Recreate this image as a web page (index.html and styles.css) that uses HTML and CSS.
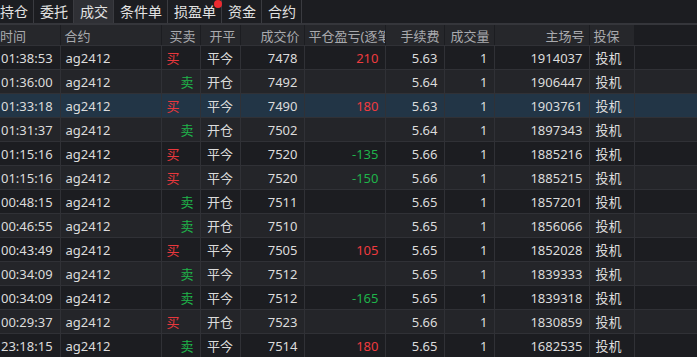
FILE: index.html
```html
<!DOCTYPE html>
<html lang="zh-CN">
  <head>
    <meta charset="UTF-8" />
    <title>成交</title>
    <link rel="stylesheet" href="styles.css">
  </head>
  <body>
    <nav class="tabs">
      <span class="tab">持仓</span>
      <span class="tab">委托</span>
      <span class="tab active">成交</span>
      <span class="tab">条件单</span>
      <span class="tab has-dot">损盈单</span>
      <span class="tab">资金</span>
      <span class="tab">合约</span>
    </nav>
    <table class="trades">
      <colgroup>
        <col class="c-time" /><col class="c-code" /><col class="c-side" /><col class="c-oc" />
        <col class="c-price" /><col class="c-pnl" /><col class="c-fee" /><col class="c-vol" />
        <col class="c-id" /><col class="c-hedge" /><col />
      </colgroup>
      <thead>
        <tr>
          <th class="l">时间</th>
          <th class="l">合约</th>
          <th>买卖</th>
          <th>开平</th>
          <th>成交价</th>
          <th class="l">平仓盈亏(逐笔)</th>
          <th>手续费</th>
          <th>成交量</th>
          <th>主场号</th>
          <th class="l">投保</th>
          <th class="blank"></th>
        </tr>
      </thead>
      <tbody>
        <tr><td>01:38:53</td><td class="code">ag2412</td><td class="buy">买</td><td class="c">平今</td><td class="r">7478</td><td class="r up">210</td><td class="r">5.63</td><td class="r">1</td><td class="r">1914037</td><td>投机</td><td class="blank"></td></tr>
        <tr><td>01:36:00</td><td class="code">ag2412</td><td class="sell">卖</td><td class="c">开仓</td><td class="r">7492</td><td class="r"></td><td class="r">5.64</td><td class="r">1</td><td class="r">1906447</td><td>投机</td><td class="blank"></td></tr>
        <tr class="selected"><td>01:33:18</td><td class="code">ag2412</td><td class="buy">买</td><td class="c">平今</td><td class="r">7490</td><td class="r up">180</td><td class="r">5.63</td><td class="r">1</td><td class="r">1903761</td><td>投机</td><td class="blank"></td></tr>
        <tr><td>01:31:37</td><td class="code">ag2412</td><td class="sell">卖</td><td class="c">开仓</td><td class="r">7502</td><td class="r"></td><td class="r">5.64</td><td class="r">1</td><td class="r">1897343</td><td>投机</td><td class="blank"></td></tr>
        <tr><td>01:15:16</td><td class="code">ag2412</td><td class="buy">买</td><td class="c">平今</td><td class="r">7520</td><td class="r down">-135</td><td class="r">5.66</td><td class="r">1</td><td class="r">1885216</td><td>投机</td><td class="blank"></td></tr>
        <tr><td>01:15:16</td><td class="code">ag2412</td><td class="buy">买</td><td class="c">平今</td><td class="r">7520</td><td class="r down">-150</td><td class="r">5.66</td><td class="r">1</td><td class="r">1885215</td><td>投机</td><td class="blank"></td></tr>
        <tr><td>00:48:15</td><td class="code">ag2412</td><td class="sell">卖</td><td class="c">开仓</td><td class="r">7511</td><td class="r"></td><td class="r">5.65</td><td class="r">1</td><td class="r">1857201</td><td>投机</td><td class="blank"></td></tr>
        <tr><td>00:46:55</td><td class="code">ag2412</td><td class="sell">卖</td><td class="c">开仓</td><td class="r">7510</td><td class="r"></td><td class="r">5.65</td><td class="r">1</td><td class="r">1856066</td><td>投机</td><td class="blank"></td></tr>
        <tr><td>00:43:49</td><td class="code">ag2412</td><td class="buy">买</td><td class="c">平今</td><td class="r">7505</td><td class="r up">105</td><td class="r">5.65</td><td class="r">1</td><td class="r">1852028</td><td>投机</td><td class="blank"></td></tr>
        <tr><td>00:34:09</td><td class="code">ag2412</td><td class="sell">卖</td><td class="c">平今</td><td class="r">7512</td><td class="r"></td><td class="r">5.65</td><td class="r">1</td><td class="r">1839333</td><td>投机</td><td class="blank"></td></tr>
        <tr><td>00:34:09</td><td class="code">ag2412</td><td class="sell">卖</td><td class="c">平今</td><td class="r">7512</td><td class="r down">-165</td><td class="r">5.65</td><td class="r">1</td><td class="r">1839318</td><td>投机</td><td class="blank"></td></tr>
        <tr><td>00:29:37</td><td class="code">ag2412</td><td class="buy">买</td><td class="c">开仓</td><td class="r">7523</td><td class="r"></td><td class="r">5.66</td><td class="r">1</td><td class="r">1830859</td><td>投机</td><td class="blank"></td></tr>
        <tr><td>23:18:15</td><td class="code">ag2412</td><td class="sell">卖</td><td class="c">平今</td><td class="r">7514</td><td class="r up">180</td><td class="r">5.65</td><td class="r">1</td><td class="r">1682535</td><td>投机</td><td class="blank"></td></tr>
      </tbody>
    </table>
  </body>
</html>
```

FILE: styles.css
```css
body {
  margin: 0;
  background: #1c1d21;
  color: #dcdcdc;
  font-family: "Noto Sans", "Noto Sans CJK SC", sans-serif;
  font-size: 13px;
  overflow: hidden;
}

/* tab strip */
.tabs {
  display: flex;
  height: 23px;
  margin-left: -6px;
  border-bottom: 2px solid #35363b;
}
.tab {
  position: relative;
  padding: 0 5px 0 6px;
  line-height: 23px;
  font-size: 14px;
  color: #e2e2e2;
  border-right: 1px solid #3a3b40;
}
.tab.active {
  background: #2f3035;
}
.has-dot::after {
  content: "";
  position: absolute;
  top: 0;
  right: -1px;
  width: 8px;
  height: 8px;
  border-radius: 50%;
  background: #ec2a30;
}

/* trades table */
.trades {
  table-layout: fixed;
  border-collapse: collapse;
  width: 697px;
}
.c-time { width: 60px; }
.c-code { width: 101px; }
.c-side { width: 39px; }
.c-oc { width: 40px; }
.c-price { width: 64px; }
.c-pnl { width: 81px; }
.c-fee { width: 59px; }
.c-vol { width: 50px; }
.c-id { width: 95px; }
.c-hedge { width: 45px; }

th {
  height: 20px;
  padding: 0 4px;
  font-weight: normal;
  color: #a9aaae;
  background: #26272b;
  border-right: 1px solid #1c1d21;
  border-bottom: 1px solid #303136;
  text-align: right;
  white-space: nowrap;
  overflow: hidden;
}
th.l { text-align: left; }
th:first-child { padding-left: 0; }
th.blank { background: #1c1d21; border-left: 1px solid #303136; }

td {
  height: 23px;
  padding: 0 6px;
  border-right: 1px solid #303136;
  border-bottom: 1px solid #303136;
  white-space: nowrap;
  overflow: hidden;
}
td:first-child { padding-left: 1px; }
td.code { padding-left: 5px; }
td.r { text-align: right; }
td.c { text-align: center; }
td.blank { border-right: none; }

tbody tr:nth-child(odd) { background: #1c1d21; }
tbody tr:nth-child(even) { background: #242529; }
tbody tr.selected { background: #223546; }

.buy { color: #e8383d; text-align: left; padding-left: 5px; }
.sell { color: #1fb34a; text-align: right; }
.up { color: #ee3b3f; }
.down { color: #1fb34a; }
```
